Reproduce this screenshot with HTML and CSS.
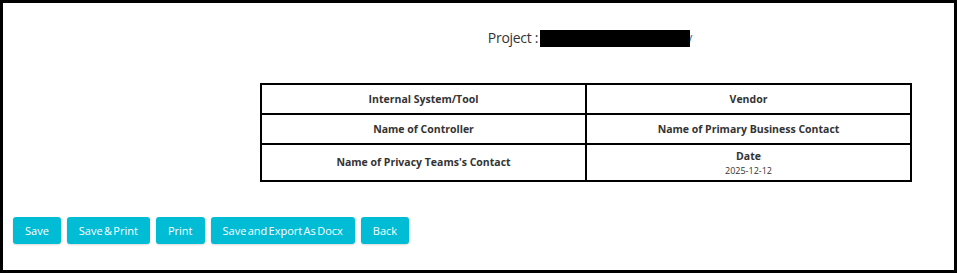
FILE: index.html
```html
<!DOCTYPE html>
<html>
<head>
<meta charset="utf-8">
<link rel="stylesheet" href="styles.css">
</head>
<body>
<div class="frame">
  <div class="content">
    <div class="project">Project :<span class="redact"><span class="redact-box"></span><span class="redact-tail">y</span></span></div>
    <table class="info">
      <tr>
        <td><b>Internal System/Tool</b></td>
        <td><b>Vendor</b></td>
      </tr>
      <tr>
        <td><b>Name of Controller</b></td>
        <td><b>Name of Primary Business Contact</b></td>
      </tr>
      <tr class="tall">
        <td><b>Name of Privacy Teams's Contact</b></td>
        <td><b>Date</b><div class="date">2025-12-12</div></td>
      </tr>
    </table>
  </div>
  <div class="actions">
    <button class="btn">Save</button>
    <button class="btn">Save &amp; Print</button>
    <button class="btn">Print</button>
    <button class="btn">Save and Export As Docx</button>
    <button class="btn">Back</button>
  </div>
</div>
</body>
</html>
```
FILE: styles.css
```css
html, body {
  margin: 0;
  padding: 0;
  background: #fff;
}
body {
  font-family: "Open Sans", "Noto Sans", sans-serif;
  color: #333;
}
.frame {
  box-sizing: border-box;
  width: 957px;
  height: 273px;
  border: 3px solid #000;
  padding-top: 25px;
}
.content {
  margin-left: 257px;
  width: 652px;
}
.project {
  text-align: center;
  font-size: 14px;
  letter-spacing: -0.3px;
  line-height: 20px;
  height: 20px;
  color: #333;
  padding-left: 8px;
}
.redact {
  display: inline-flex;
  align-items: center;
  vertical-align: top;
  height: 20px;
  letter-spacing: 0;
  margin-left: 2px;
}
.redact-box {
  display: inline-block;
  width: 150px;
  height: 17px;
  background: #000;
  position: relative;
  z-index: 1;
}
.redact-tail {
  color: #337ab7;
  margin-left: -5px;
}
.info {
  margin-top: 35px;
  width: 652px;
  border-collapse: collapse;
  table-layout: fixed;
  font-size: 10.5px;
  color: #333;
}
.info td {
  border: 2px solid #000;
  text-align: center;
  height: 28px;
  padding: 0;
  vertical-align: middle;
  line-height: 15px;
}
.info tr.tall td {
  height: 35px;
}
.info b {
  font-weight: 700;
}
.date {
  font-size: 9px;
  line-height: 13px;
}
.actions {
  display: flex;
  gap: 6px;
  margin: 35px 0 0 10px;
}
.btn {
  font-family: "Open Sans", "Noto Sans", sans-serif;
  font-size: 11px;
  word-spacing: -1.5px;
  color: #fff;
  background: #00bcd4;
  border: none;
  border-radius: 3px;
  height: 27px;
  padding: 0 12px;
  box-shadow: 0 1px 2px rgba(0,0,0,0.15);
  cursor: pointer;
}
```
